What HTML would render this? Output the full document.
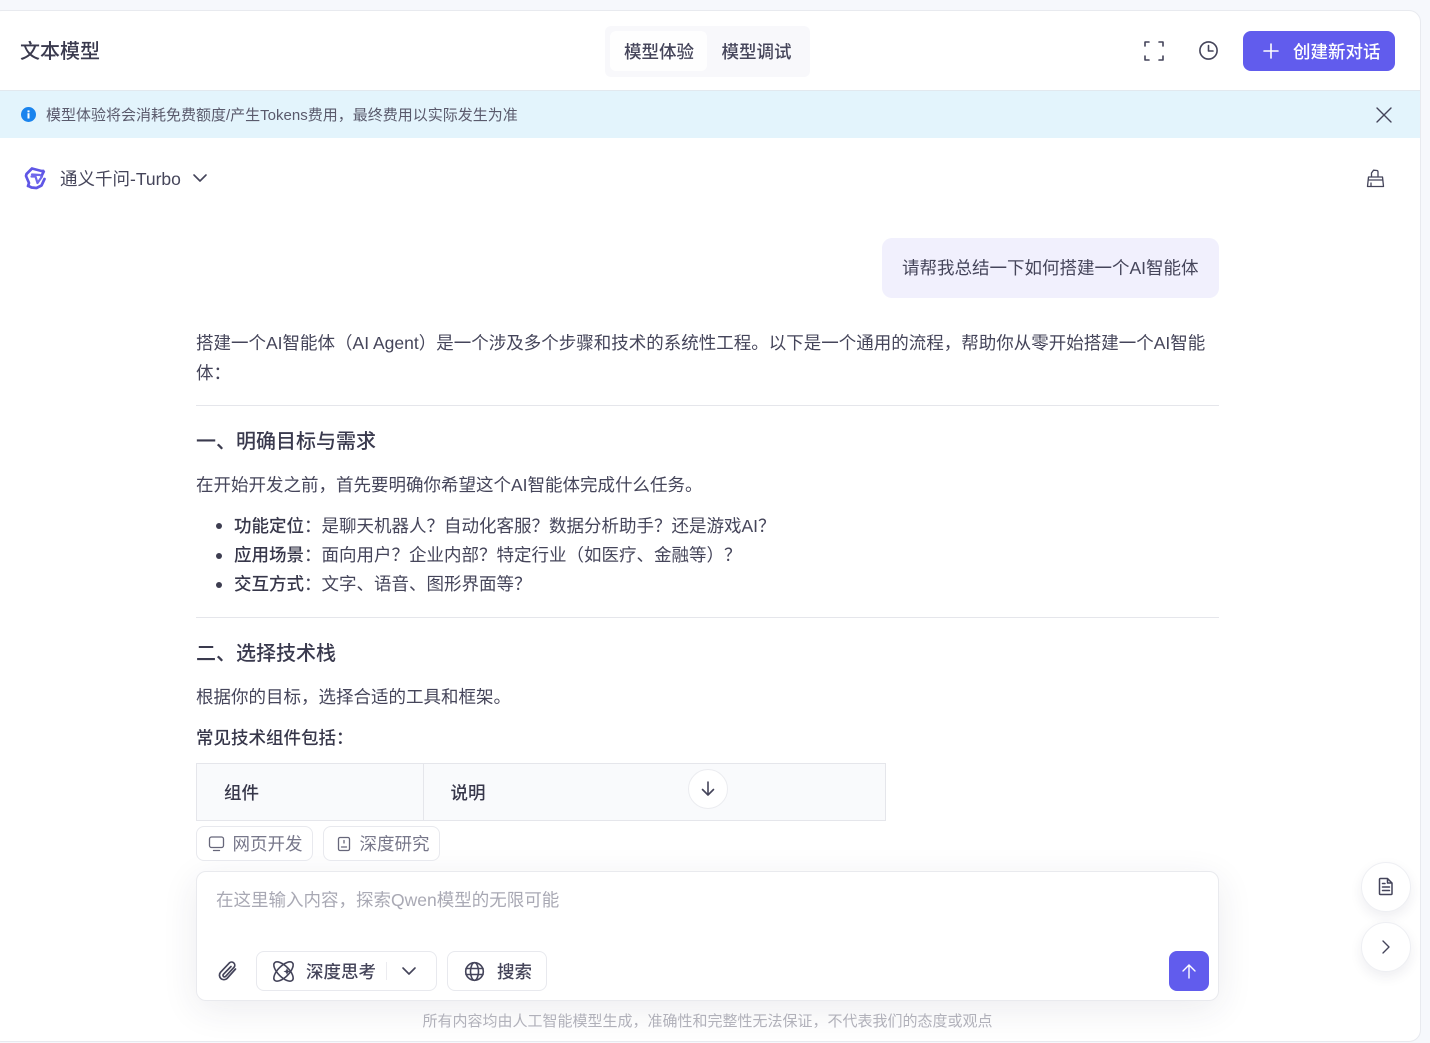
<!DOCTYPE html>
<html lang="zh"><head><meta charset="utf-8"><title>文本模型</title>
<style>
*{box-sizing:border-box}
html,body{margin:0;padding:0}
body{width:1430px;height:1043px;overflow:hidden;background:#f6f8fc;position:relative;font-family:"Liberation Sans","Noto Sans CJK SC",sans-serif;color:#3d3d50}
.t{position:absolute;white-space:nowrap;line-height:30px;font-size:17.5px;color:#45455a}
.b{font-weight:500;color:#37374a}
.h{font-size:20px;font-weight:500;color:#3a3a4e}
svg{position:absolute;overflow:visible;fill:none;stroke:#44445a;stroke-width:1.6;stroke-linecap:round;stroke-linejoin:round}
.hr{position:absolute;left:196px;width:1023px;height:1px;background:#e5e6eb}
.dot{position:absolute;left:216px;width:6px;height:6px;border-radius:50%;background:#3d3d50}
.chip{position:absolute;top:826px;height:35px;background:#fff;border:1px solid #e8e9ee;border-radius:8px}
.btn{position:absolute;top:951px;height:40px;background:#fff;border:1px solid #e8e9ee;border-radius:8px}
.circ{position:absolute;left:1361px;width:50px;height:50px;border-radius:50%;background:#fff;border:1px solid #eeeff3;box-shadow:0 5px 12px rgba(40,40,80,.08)}
</style></head><body>
<div style="position:absolute;left:-10px;top:10px;width:1431px;height:1032px;background:#fff;border:1px solid #e8eaef;border-radius:12px"></div>
<div style="position:absolute;left:0;top:90px;width:1420px;height:48px;background:#e3f4fc;border-top:1px solid #e2e8ee"></div>

<div class="t" style="left:20px;top:37px;font-size:20px;font-weight:500;color:#3a3a4e">文本模型</div>
<div style="position:absolute;left:605px;top:26px;width:205px;height:51px;background:#f8f8fb;border-radius:6px"></div>
<div style="position:absolute;left:610px;top:31px;width:97px;height:40px;background:#fefefe;border-radius:6px"></div>
<div class="t" style="left:624px;top:37px;font-weight:500;color:#45455a">模型体验</div>
<div class="t" style="left:721.500px;top:37px;font-weight:500;color:#45455a">模型调试</div>

<svg style="left:1143px;top:40px" width="22" height="22" viewBox="0 0 22 22"><path d="M2 6V2h4M16 2h4v4M20 16v4h-4M6 20H2v-4"/></svg>
<svg style="left:1198px;top:40px" width="21" height="21" viewBox="0 0 21 21"><circle cx="10.500" cy="10.500" r="8.600"/><path d="M10.500 5.500v5.500h4.500"/></svg>
<div style="position:absolute;left:1243px;top:31px;width:152px;height:40px;background:#615ced;border-radius:8px"></div>
<svg style="left:1262px;top:42px;stroke:#fff" width="18" height="18" viewBox="0 0 18 18"><path d="M9 2v14M2 9h14"/></svg>
<div class="t" style="left:1293px;top:37px;color:#fff;font-weight:500">创建新对话</div>

<svg style="left:21px;top:107px;stroke:none" width="15" height="15" viewBox="0 0 15 15"><circle cx="7.500" cy="7.500" r="7.500" fill="#1a84ee"/><rect x="6.500" y="6.200" width="2" height="5.300" fill="#fff"/><rect x="6.500" y="3.400" width="2" height="1.900" fill="#fff"/></svg>
<div class="t" style="left:46px;top:100.500px;font-size:15px;color:#5a5a6c">模型体验将会消耗免费额度/产生Tokens费用，最终费用以实际发生为准</div>
<svg style="left:1376px;top:107px;stroke-width:1.400" width="16" height="16" viewBox="0 0 16 16"><path d="M1 1l14 14M15 1L1 15"/></svg>

<svg style="left:23px;top:166px;stroke:#5f56e6;stroke-width:2.700;stroke-linejoin:bevel" width="24" height="24" viewBox="0 0 24 24"><path d="M9 2.500l9.500 2.500H21l-2.500 5M9 2.500L3.500 8l-.5 2 3 7-1 3M21.500 13l-3 6.500-5 2.500-5-.5-3-1.500"/><path stroke="#6f68ec" stroke-width="2.200" d="M8.500 10.500h4l2 6.500M19 10.500l-4.500 6.500M9 8.500l8 .5"/></svg>
<div class="t" style="left:60px;top:164px;font-size:17.5px;color:#45455a">通义千问-Turbo</div>
<svg style="left:192px;top:172px" width="16" height="12" viewBox="0 0 16 12"><path d="M2 3l6 6 6-6"/></svg>
<svg style="left:1366px;top:169px;stroke-width:1.300" width="19" height="19" viewBox="0 0 19 19"><path d="M5.500 8V4l2-2.800 3.500 .3q1 .2 1 1.500v5M2.500 8h14l1 9.500H1.500zM2.200 11h14.600M5 17.500v-3.500"/></svg>

<div style="position:absolute;left:882px;top:238px;width:337px;height:60px;background:#f1f0fd;border-radius:10px"></div>
<div class="t" style="left:902px;top:253px">请帮我总结一下如何搭建一个AI智能体</div>

<div class="t" style="left:196px;top:328px">搭建一个AI智能体（AI Agent）是一个涉及多个步骤和技术的系统性工程。以下是一个通用的流程，帮助你从零开始搭建一个AI智能</div>
<div class="t" style="left:196px;top:358px">体：</div>
<div class="hr" style="top:405px"></div>
<div class="t h" style="left:196px;top:427px">一、明确目标与需求</div>
<div class="t" style="left:196px;top:470px">在开始开发之前，首先要明确你希望这个AI智能体完成什么任务。</div>
<div class="dot" style="top:523px"></div>
<div class="t" style="left:234px;top:510.500px"><span class="b">功能定位</span>：是聊天机器人？自动化客服？数据分析助手？还是游戏AI？</div>
<div class="dot" style="top:553px"></div>
<div class="t" style="left:234px;top:540px"><span class="b">应用场景</span>：面向用户？企业内部？特定行业（如医疗、金融等）？</div>
<div class="dot" style="top:582px"></div>
<div class="t" style="left:234px;top:569px"><span class="b">交互方式</span>：文字、语音、图形界面等？</div>
<div class="hr" style="top:617px"></div>
<div class="t h" style="left:196px;top:639px">二、选择技术栈</div>
<div class="t" style="left:196px;top:682px">根据你的目标，选择合适的工具和框架。</div>
<div class="t b" style="left:196px;top:723px">常见技术组件包括：</div>

<div style="position:absolute;left:196px;top:763px;width:690px;height:58px;background:#f9fafc;border:1px solid #e5e6eb"></div>
<div style="position:absolute;left:423px;top:764px;width:1px;height:56px;background:#e5e6eb"></div>
<div class="t b" style="left:224px;top:777.500px">组件</div>
<div class="t b" style="left:450.500px;top:777.500px">说明</div>
<div style="position:absolute;left:688px;top:769px;width:40px;height:40px;border-radius:50%;background:#fff;border:1px solid #ebecf0"></div>
<svg style="left:699px;top:780px" width="18" height="18" viewBox="0 0 18 18"><path d="M9 2v13M3.500 9.500L9 15l5.500-5.500"/></svg>

<div style="position:absolute;left:196px;top:872px;width:1023px;height:129px;border-radius:10px;box-shadow:0 8px 36px rgba(40,40,80,.09)"></div>
<div class="chip" style="left:196px;width:117px"></div>
<svg style="left:208px;top:836px;stroke:#66667a;stroke-width:1.300" width="17" height="16" viewBox="0 0 17 16"><rect x="1.500" y="1" width="14" height="10.500" rx="2"/><path d="M5.500 14.500h6"/></svg>
<div class="t" style="left:232.500px;top:829px;color:#77778a">网页开发</div>
<div class="chip" style="left:323px;width:117px"></div>
<svg style="left:336px;top:836px;stroke:#66667a;stroke-width:1.300" width="16" height="16" viewBox="0 0 16 16"><rect x="2.500" y="1.500" width="11" height="13" rx="1.500"/><path d="M5.500 11h5M8 4.500v2.500"/></svg>
<div class="t" style="left:359.500px;top:829px;color:#77778a">深度研究</div>

<div style="position:absolute;left:196px;top:871px;width:1023px;height:130px;background:#fff;border:1px solid #e9eaee;border-radius:10px"></div>
<div class="t" style="left:216px;top:885px;color:#a9a9b4">在这里输入内容，探索Qwen模型的无限可能</div>
<svg style="left:216px;top:960px;stroke-width:1.700" width="23" height="23" viewBox="0 0 23 23"><path d="M19.500 9l-8.500 9.500a4.500 4.500 0 0 1-6.500-6.200L13.500 2.800a3.200 3.200 0 0 1 4.600 4.400l-8.500 9.200a1.500 1.500 0 0 1-2.200-2.100L15 6.500"/></svg>
<div class="btn" style="left:256px;width:181px"></div>
<svg style="left:272px;top:960px;stroke-width:1.600" width="23" height="23" viewBox="0 0 23 23"><ellipse cx="11.500" cy="11.500" rx="5.500" ry="12.500" transform="rotate(45 11.500 11.500)"/><ellipse cx="11.500" cy="11.500" rx="5.500" ry="12.500" transform="rotate(-45 11.500 11.500)"/><path d="M15 8l1 2.500 2.500 1-2.500 1-1 2.500-1-2.500-2.500-1 2.500-1z" fill="#44445a" stroke="none"/></svg>
<div class="t b" style="left:306px;top:956.500px;font-weight:500;color:#45455a">深度思考</div>
<div style="position:absolute;left:386px;top:962px;width:1px;height:18px;background:#ececf0"></div>
<svg style="left:401px;top:965px" width="16" height="12" viewBox="0 0 16 12"><path d="M2 3l6 6 6-6"/></svg>
<div class="btn" style="left:447px;width:100px"></div>
<svg style="left:464px;top:961px" width="21" height="21" viewBox="0 0 21 21"><circle cx="10.500" cy="10.500" r="8.800"/><ellipse cx="10.500" cy="10.500" rx="4" ry="8.800"/><path d="M2 7.500h17M2 13.500h17"/></svg>
<div class="t b" style="left:497px;top:956.500px;font-weight:500;color:#45455a">搜索</div>
<div style="position:absolute;left:1169px;top:951px;width:40px;height:40px;background:#615ced;border-radius:8px"></div>
<svg style="left:1180px;top:962px;stroke:#fff;stroke-width:1.400" width="18" height="18" viewBox="0 0 18 18"><path d="M9 16V3M3 9l6-6 6 6"/></svg>

<div class="t" style="left:422.500px;top:1007px;font-size:15px;color:#b1b1ba">所有内容均由人工智能模型生成，准确性和完整性无法保证，不代表我们的态度或观点</div>

<div class="circ" style="top:862px"></div>
<svg style="left:1377px;top:877px;stroke-width:1.500" width="18" height="19" viewBox="0 0 18 19"><path d="M3.500 1.500h7l4.500 4.500v10.500q0 1-1 1H3.500q-1 0-1-1V2.500q0-1 1-1zM10.500 1.500V6H15M5.500 6.500h2.500M5.500 10h7M5.500 13.500h7"/></svg>
<div class="circ" style="top:922px"></div>
<svg style="left:1380px;top:939px;stroke-width:1.400" width="12" height="16" viewBox="0 0 12 16"><path d="M3 2l6 6-6 6"/></svg>
</body></html>
